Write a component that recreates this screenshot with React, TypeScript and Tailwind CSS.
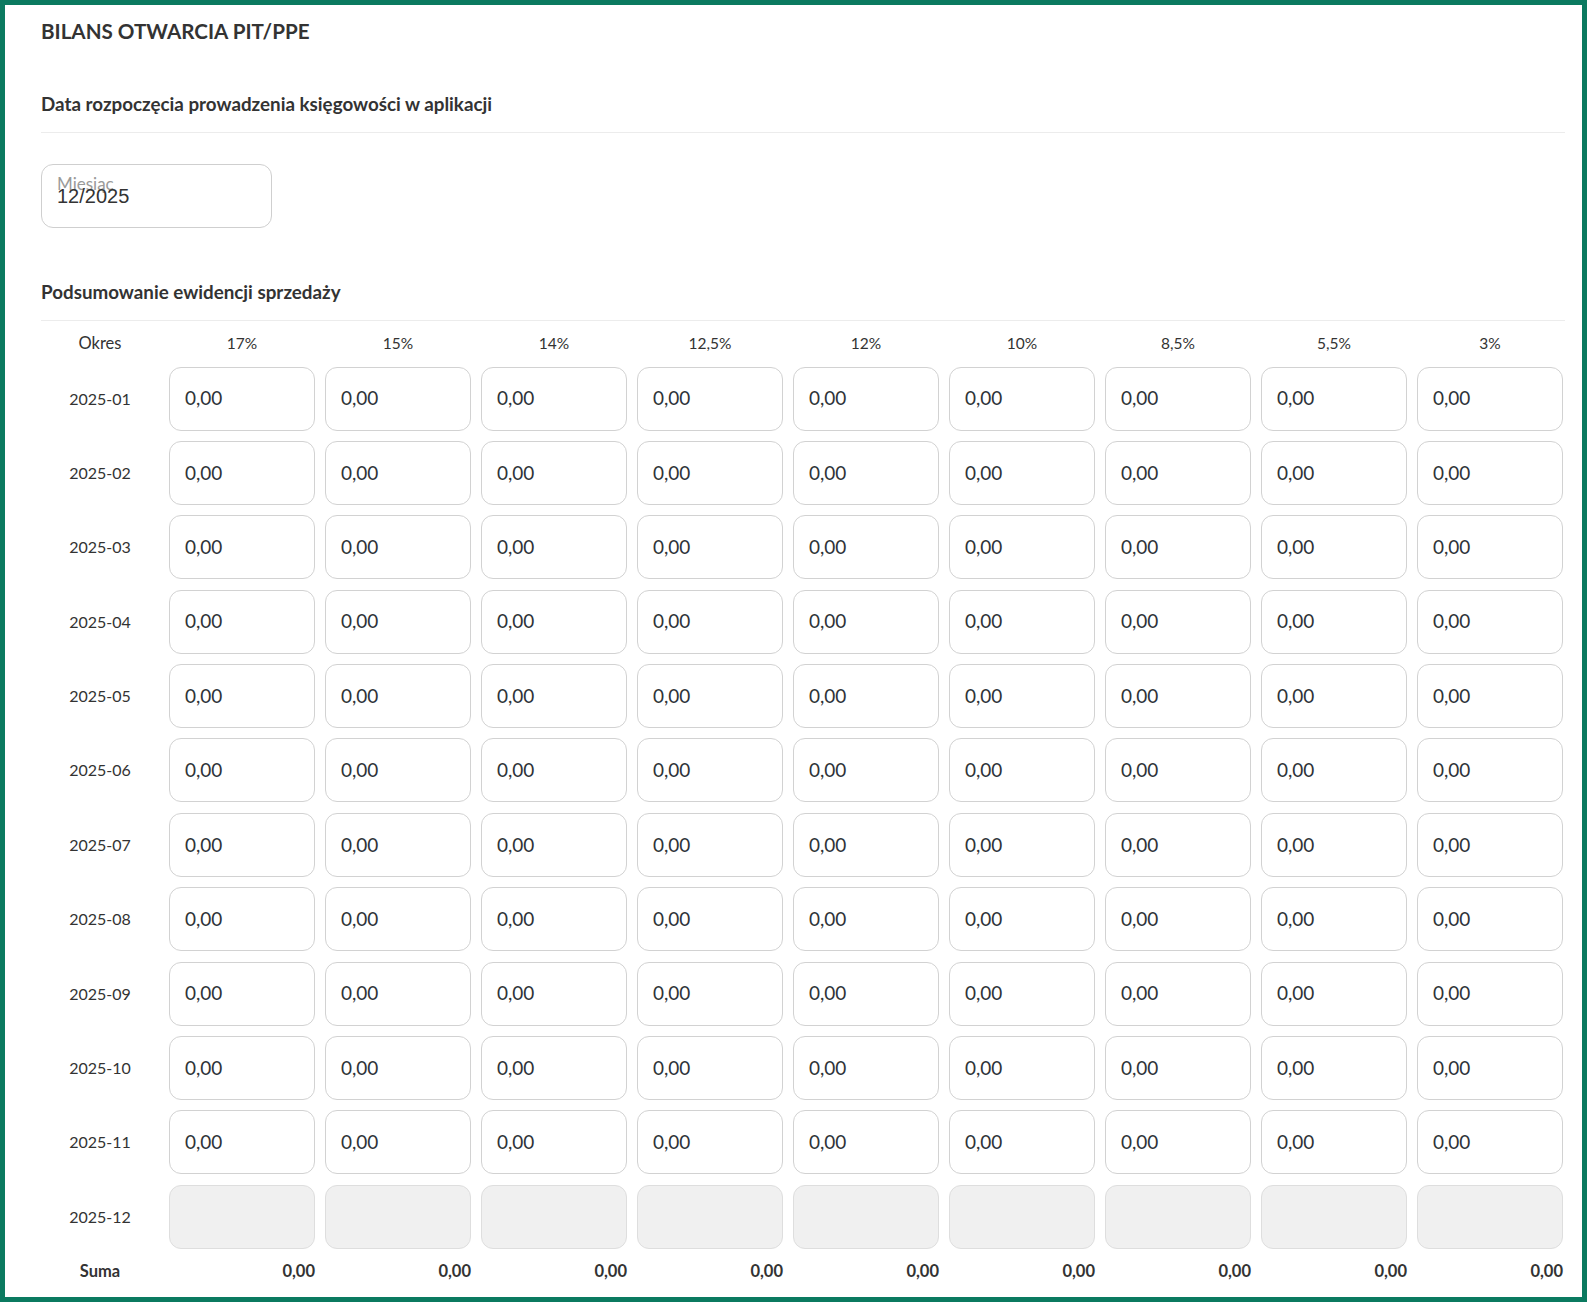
import React from "react";

const RATES = ["17%", "15%", "14%", "12,5%", "12%", "10%", "8,5%", "5,5%", "3%"];
const PERIODS = [
  "2025-01", "2025-02", "2025-03", "2025-04", "2025-05", "2025-06",
  "2025-07", "2025-08", "2025-09", "2025-10", "2025-11", "2025-12",
];

function Cell({ disabled }: { disabled?: boolean }) {
  if (disabled) {
    return <div className="h-[64px] rounded-[12px] border border-[#dedede] bg-[#f0f0f0]" />;
  }
  return (
    <div className="flex h-[64px] items-center rounded-[12px] border border-[#d2d2d2] bg-white pl-[15px] text-[19px] text-[#2f3338]">
      0,00
    </div>
  );
}

export default function App() {
  return (
    <div className="h-[1302px] w-[1587px] border-[5px] border-[#0b7a60] bg-white font-['Lato','Open_Sans',sans-serif] text-[#333]">
      <div className="ml-[36px] w-[1524px]">
        <h1 className="pt-[11.5px] text-[20.6px] font-bold leading-[28px] text-[#333]">BILANS OTWARCIA PIT/PPE</h1>

        <h2 className="mt-[46px] border-b border-[#ececec] pb-[15px] text-[18.8px] font-bold leading-[26px]">
          Data rozpoczęcia prowadzenia księgowości w aplikacji
        </h2>

        <div className="relative mt-[31px] h-[64px] w-[231px] rounded-[12px] border border-[#cfcfcf]">
          <span className="absolute left-[15px] top-[9px] text-[17px] leading-[20px] text-[#9a9a9a]">Miesiąc</span>
          <span className="absolute left-[15px] top-[19px] font-['Liberation_Sans',Arial,sans-serif] text-[20px] leading-[24px] text-[#333]">
            12/2025
          </span>
        </div>

        <h2 className="mt-[51px] border-b border-[#ececec] pb-[15px] text-[18.8px] font-bold leading-[26px]">
          Podsumowanie ewidencji sprzedaży
        </h2>

        <div className="grid grid-cols-[118px_repeat(9,146px)] gap-x-[10px] gap-y-[10.4px]">
          <div className="-mb-[10.4px] flex h-[46px] items-center justify-center text-[16.5px]">Okres</div>
          {RATES.map((r) => (
            <div key={r} className="-mb-[10.4px] flex h-[46px] items-center justify-center text-[15.5px]">{r}</div>
          ))}

          {PERIODS.map((p, i) => (
            <React.Fragment key={p}>
              <div className="flex h-[64px] items-center justify-center text-[16px]">{p}</div>
              {RATES.map((r) => (
                <Cell key={r} disabled={i === PERIODS.length - 1} />
              ))}
            </React.Fragment>
          ))}

          <div className="-mt-[10.4px] flex h-[46px] items-center justify-center text-[16.5px] font-bold">Suma</div>
          {RATES.map((r) => (
            <div key={r} className="-mt-[10.4px] flex h-[46px] items-center justify-end text-[16.5px] font-bold">0,00</div>
          ))}
        </div>
      </div>
    </div>
  );
}
